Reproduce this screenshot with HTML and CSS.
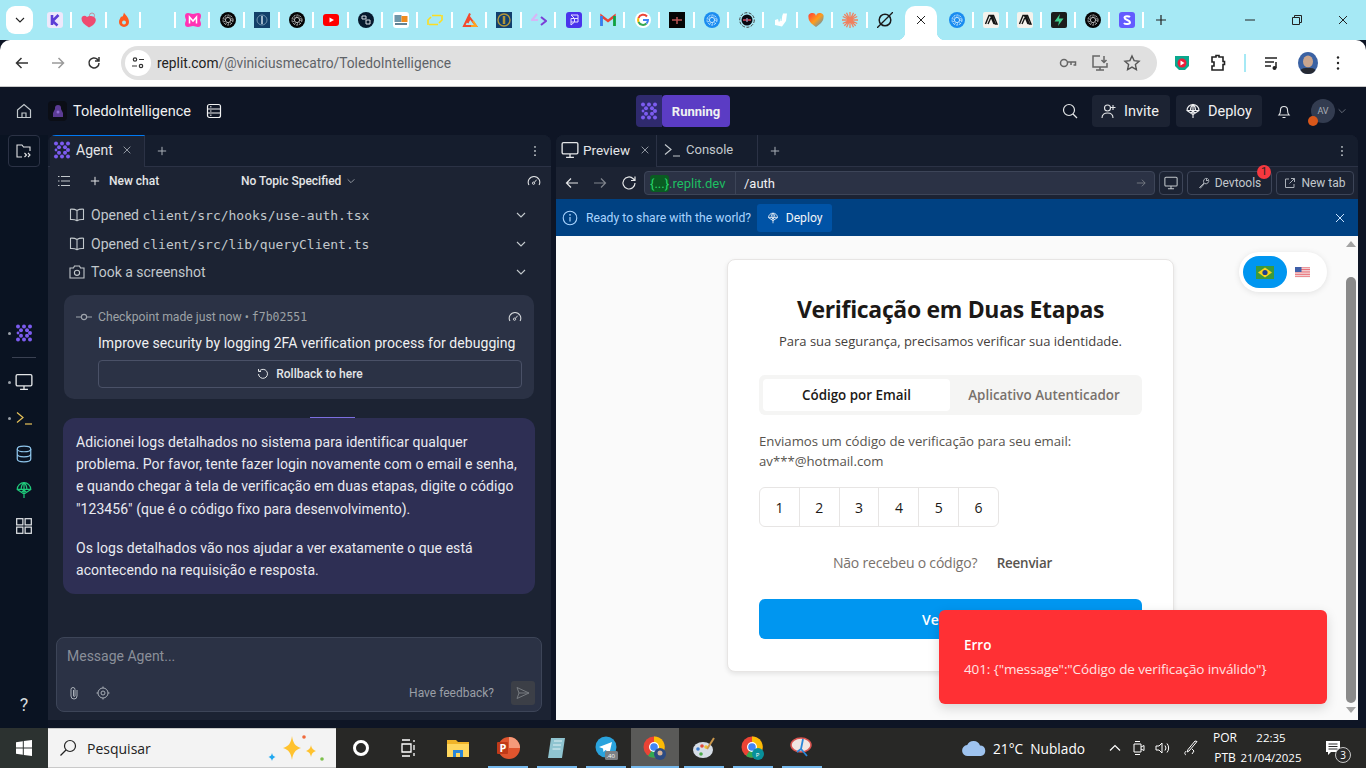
FILE: index.html
```html
<!DOCTYPE html>
<html lang="pt-BR">
<head>
    <meta charset="UTF-8">
    <title>ToledoIntelligence - Replit</title>
    <link rel="stylesheet" href="styles.css">
</head>
<body>
    <svg class="defs" xmlns="http://www.w3.org/2000/svg">
        <symbol id="i-agent" viewBox="0 0 18 18">
            <g fill="currentColor">
                <circle cx="3" cy="2.5" r="2"/><circle cx="9" cy="2.5" r="2"/><circle cx="15" cy="2.5" r="2"/>
                <circle cx="6" cy="6.2" r="2"/><circle cx="12" cy="6.2" r="2"/>
                <circle cx="3" cy="9" r="1.4"/><circle cx="15" cy="9" r="2"/>
                <circle cx="6" cy="11.8" r="2"/><circle cx="12" cy="11.8" r="2"/>
                <circle cx="3" cy="15.5" r="2"/><circle cx="9" cy="15.5" r="2"/><circle cx="15" cy="15.5" r="2"/>
            </g>
        </symbol>
        <symbol id="i-monitor" viewBox="0 0 16 16">
            <rect x="1" y="1.5" width="14" height="10" rx="1.2" fill="none" stroke="currentColor" stroke-width="1.2"/>
            <path d="M8 11.5v3M4.5 14.5h7" fill="none" stroke="currentColor" stroke-width="1.2"/>
        </symbol>
        <symbol id="i-term" viewBox="0 0 18 16">
            <path d="M2 2.5 8 7.5 2 12.5" fill="none" stroke="currentColor" stroke-width="1.2"/>
            <path d="M10 14h7" fill="none" stroke="currentColor" stroke-width="1.2"/>
        </symbol>
        <symbol id="i-chev" viewBox="0 0 12 12">
            <path d="M2 4 6 8 10 4" fill="none" stroke="currentColor" stroke-width="1.1"/>
        </symbol>
        <symbol id="i-close" viewBox="0 0 12 12">
            <path d="M2 2 10 10M10 2 2 10" fill="none" stroke="currentColor" stroke-width="1"/>
        </symbol>
        <symbol id="i-plus" viewBox="0 0 12 12">
            <path d="M6 1v10M1 6h10" fill="none" stroke="currentColor" stroke-width="1.2"/>
        </symbol>
        <symbol id="i-dots" viewBox="0 0 12 16">
            <g fill="currentColor"><circle cx="6" cy="2.5" r="1.2"/><circle cx="6" cy="8" r="1.2"/><circle cx="6" cy="13.5" r="1.2"/></g>
        </symbol>
        <symbol id="i-book" viewBox="0 0 16 16">
            <path d="M8 3.500C6.500 2.500 4 2 1.500 2.200v10.300c2.500-.2 5 .2 6.500 1.200 1.500-1 4-1.400 6.500-1.200V2.200C12 2 9.500 2.500 8 3.500ZM8 3.500v10.200" fill="none" stroke="currentColor" stroke-width="1.100"/>
        </symbol>
        <symbol id="i-gauge" viewBox="0 0 16 16">
            <path d="M2.200 12.500A6.600 6.600 0 1 1 13.800 12.500" fill="none" stroke="currentColor" stroke-width="1.200"/>
            <circle cx="7.500" cy="10.500" r="1.300" fill="none" stroke="currentColor" stroke-width="1.100"/>
            <path d="M8.500 9.500 11 6.500" stroke="currentColor" stroke-width="1.100"/>
        </symbol>
        <symbol id="i-globe" viewBox="0 0 16 16">
            <g fill="none" stroke="currentColor" stroke-width="1.100">
                <path d="M2 7.500a6 6 0 0 1 12 0Z"/>
                <path d="M5.500 7.500C5.500 4.500 6.500 2.500 8 1.500 9.500 2.500 10.500 4.500 10.500 7.500M2 7.500 8 11.500 14 7.500M8 1.500V15M6 10l2-2 2 2"/>
            </g>
        </symbol>
        <symbol id="i-flower" viewBox="0 0 16 16">
            <circle cx="8" cy="8" r="8" fill="#050505"/>
            <g fill="none" stroke="#cfcfcf" stroke-width=".9">
                <circle cx="8" cy="8" r="2.600"/>
                <circle cx="8" cy="8" r="5" stroke-dasharray="2.200 1"/>
                <circle cx="8" cy="8" r="3.800" stroke-dasharray="1 1.400"/>
            </g>
        </symbol>
        <symbol id="i-flower-blue" viewBox="0 0 16 16">
            <circle cx="8" cy="8" r="8" fill="#1a8cf0"/>
            <g fill="none" stroke="#d8efff" stroke-width=".9">
                <circle cx="8" cy="8" r="2.600"/>
                <circle cx="8" cy="8" r="5" stroke-dasharray="2.200 1"/>
                <circle cx="8" cy="8" r="3.800" stroke-dasharray="1 1.400"/>
            </g>
        </symbol>
        <symbol id="i-anthropic" viewBox="0 0 16 16">
            <rect width="16" height="16" rx="2" fill="#f4f2ec"/>
            <path d="M2.500 12 6 3.500h1.500L11 12M5 12l2.700-6M9 3.500h1.500L14 12h-1.800Z" fill="none" stroke="#141413" stroke-width="1.400"/>
        </symbol>
    </svg>

    <!-- barra de abas do navegador -->
    <div class="tabstrip">
        <div class="tab-menu"><svg class="ic-12"><use href="#i-chev"/></svg></div>
        <div class="tab"><svg class="fav" viewBox="0 0 16 16"><rect width="16" height="16" rx="3" fill="#eee8fb"/><path d="M5 3v10M11.500 3 5.500 9l5 4.500" fill="none" stroke="#5b3fd6" stroke-width="2.600"/></svg></div>
        <div class="tab"><svg class="fav" viewBox="0 0 16 16"><circle cx="11" cy="3.500" r="2.500" fill="none" stroke="#c58a9b"/><path d="M8 15.500C3 12.500.5 10 .5 6.800.5 4 3.800 2.800 6 5c2.500-2 8.800-.5 8.800 3 0 3-3 6-6.800 7.500Z" fill="#ee4b70"/></svg></div>
        <div class="tab"><svg class="fav" viewBox="0 0 16 16"><path d="M8 .5c1 2.500 5 4.500 5 9.500a5 5 0 0 1-10 0C3 7.500 4.500 6.500 5 4.500c1 .5 2 .5 3-4Z" fill="#ff5a1f"/><circle cx="8" cy="10.500" r="2" fill="#a6e9f5"/></svg></div>
        <div class="tab"></div>
        <div class="tab"><svg class="fav" viewBox="0 0 16 16"><path d="M3 1c2 0 3 1 5 1s3-1 5-1 3 1 3 3-1 3-1 4 1 2 1 4-1 3-3 3-3-1-5-1-3 1-5 1-3-1-3-3 1-3 1-4-1-2-1-4 1-3 3-3Z" fill="#ff33b4"/><path d="M4.500 11.500V5L8 9l3.500-4v6.500" fill="none" stroke="#fff" stroke-width="1.500"/></svg></div>
        <div class="tab"><svg class="fav"><use href="#i-flower"/></svg></div>
        <div class="tab"><svg class="fav" viewBox="0 0 16 16"><rect width="16" height="16" fill="#12416a"/><circle cx="8" cy="8" r="5" fill="none" stroke="#6f92ad"/><path d="M8 4v8" stroke="#9fb6c8" stroke-width="2"/></svg></div>
        <div class="tab"><svg class="fav"><use href="#i-flower"/></svg></div>
        <div class="tab"><svg class="fav" viewBox="0 0 16 16"><rect y="2" width="16" height="12" rx="3" fill="#f00"/><path d="M6.500 5.500v5L11 8Z" fill="#fff"/></svg></div>
        <div class="tab"><svg class="fav" viewBox="0 0 16 16"><circle cx="8" cy="8" r="8" fill="#071a2e"/><path d="M4 4h4v3H4ZM8 8h4v4H8Z" fill="none" stroke="#d7dde3"/></svg></div>
        <div class="tab"><svg class="fav" viewBox="0 0 16 16"><rect width="16" height="16" rx="3" fill="#fff"/><rect x="1.500" y="3" width="7" height="7" fill="#6f96a8"/><rect x="8.500" y="4" width="6" height="6" fill="#ef8b1d"/><path d="M2 12h12" stroke="#2d5870" stroke-width="1.500"/></svg></div>
        <div class="tab"><svg class="fav" viewBox="0 0 16 16"><path d="M1 13V8l3-3M15 3v5l-3 3M5 3.500h9M2 12.500h9" fill="none" stroke="#ffdd1f" stroke-width="1.600"/></svg></div>
        <div class="tab"><svg class="fav" viewBox="0 0 16 16"><path d="M8 1.500 2 14h12L8 6 5.500 11" fill="none" stroke="#f24a2e" stroke-width="2"/><path d="M9 14h5L11 9" fill="none" stroke="#ffa51f" stroke-width="2"/></svg></div>
        <div class="tab"><svg class="fav" viewBox="0 0 16 16"><rect width="16" height="16" fill="#12406e"/><circle cx="8" cy="8" r="6" fill="none" stroke="#b0953a" stroke-width="1.400"/><path d="M8 4v8" stroke="#b0953a" stroke-width="2.500"/></svg></div>
        <div class="tab"><svg class="fav" viewBox="0 0 16 16"><path d="M6 2 1 8h6" fill="none" stroke="#d6b6f5" stroke-width="2.200"/><path d="M10 5l5 4-5 4" fill="none" stroke="#7a3fd6" stroke-width="2"/></svg></div>
        <div class="tab"><svg class="fav" viewBox="0 0 16 16"><rect width="16" height="16" rx="3" fill="#4a34ec"/><path d="M5 3h7v3.500H8.500L5 3ZM5 6.500h3.500V10H5ZM8.500 6.500H12V10H8.500L5 13V10" fill="none" stroke="#e5e1ff"/></svg></div>
        <div class="tab"><svg class="fav" viewBox="0 0 16 16"><path d="M1.500 14V4l6.500 5 6.500-5v10" fill="none" stroke="#ea4335" stroke-width="2.400"/><path d="M1.500 14V4" stroke="#2a84fc" stroke-width="2.600"/><path d="M14.500 14V4" stroke="#00ac47" stroke-width="2.600"/></svg></div>
        <div class="tab"><svg class="fav" viewBox="0 0 16 16"><circle cx="8" cy="8" r="8" fill="#fff"/><path d="M12 4.500A5 5 0 0 0 3.500 6" fill="none" stroke="#ea4335" stroke-width="2"/><path d="M3.500 6a5 5 0 0 0 0 4" fill="none" stroke="#fbbc05" stroke-width="2"/><path d="M3.500 10a5 5 0 0 0 8 1.500" fill="none" stroke="#34a853" stroke-width="2"/><path d="M11.500 11.500a5 5 0 0 0 1.500-3.500H8" fill="none" stroke="#4285f4" stroke-width="2"/></svg></div>
        <div class="tab"><svg class="fav" viewBox="0 0 16 16"><rect width="16" height="16" fill="#050505"/><path d="M3 8h10M8 5v7" stroke="#b55" stroke-width="1.500"/></svg></div>
        <div class="tab"><svg class="fav"><use href="#i-flower-blue"/></svg></div>
        <div class="tab"><svg class="fav" viewBox="0 0 16 16"><circle cx="8" cy="8" r="7.300" fill="none" stroke="#444" stroke-dasharray="3 1.500"/><circle cx="8" cy="8" r="5.500" fill="#0a0a12"/><path d="M4 8h8" stroke="#d9495c" stroke-width="1.500"/><path d="M8 6v4" stroke="#88a" stroke-width="1.500"/></svg></div>
        <div class="tab"><svg class="fav" viewBox="0 0 16 16"><path d="M10 1.500h4L13 9l-4 5.500-7-1.500L2 8l3-1 1 3.500Z" fill="#fff"/><path d="M9 2 8 9" stroke="#a6e9f5"/></svg></div>
        <div class="tab"><svg class="fav" viewBox="0 0 16 16"><defs><linearGradient id="hg" x1="0" y1="0" x2="1" y2="1"><stop offset="0" stop-color="#ff3d3d"/><stop offset=".5" stop-color="#ff9d1c"/><stop offset="1" stop-color="#2a8fe8"/></linearGradient></defs><path d="M8 15C3 11.500.5 9 .5 5.500A3.800 3.800 0 0 1 8 4a3.800 3.800 0 0 1 7.500 1.500C15.500 9 13 11.500 8 15Z" fill="url(#hg)"/></svg></div>
        <div class="tab"><svg class="fav" viewBox="0 0 16 16"><path d="M8 0v16M0 8h16M2.300 2.300 13.700 13.700M13.700 2.300 2.300 13.700M4.500 .8l7 14.400M11.500 .8l-7 14.400M.8 4.500l14.400 7M15.200 4.500l-14.400 7" stroke="#f0805e" stroke-width="1.300"/></svg></div>
        <div class="tab no-sep"><svg class="fav" viewBox="0 0 16 16"><circle cx="8" cy="8" r="5.800" fill="none" stroke="#1a1a1a" stroke-width="1.500"/><path d="M0 16 16 0" stroke="#1a1a1a" stroke-width="1.300"/></svg></div>
        <div class="tab-active"><svg class="ic-12"><use href="#i-close"/></svg></div>
        <div class="tab tab-r first-after"><svg class="fav"><use href="#i-flower-blue"/></svg></div>
        <div class="tab tab-r"><svg class="fav"><use href="#i-anthropic"/></svg></div>
        <div class="tab tab-r"><svg class="fav"><use href="#i-anthropic"/></svg></div>
        <div class="tab tab-r"><svg class="fav" viewBox="0 0 16 16"><rect width="16" height="16" rx="2" fill="#1c1c1c"/><path d="M9 2 3.500 9.500H8L7 14l5.500-7.500H8Z" fill="#3ecf8e"/></svg></div>
        <div class="tab tab-r"><svg class="fav"><use href="#i-flower"/></svg></div>
        <div class="tab tab-r"><svg class="fav" viewBox="0 0 16 16"><rect width="16" height="16" rx="3" fill="#635bff"/><path d="M11 5C10 4 5.500 3.500 5.500 5.800S11 8 11 10.300 6 12.500 5 11" fill="none" stroke="#fff" stroke-width="2"/></svg></div>
        <div class="tab-new"><svg class="ic-12"><use href="#i-plus"/></svg></div>
        <div class="win-controls">
            <svg class="ic-12" viewBox="0 0 12 12"><path d="M1 6h10" stroke="#222" stroke-width="1"/></svg>
            <svg class="ic-12" viewBox="0 0 12 12"><path d="M1.500 3.500h7v7h-7ZM3.500 3.500v-2h7v7h-2" fill="none" stroke="#222"/></svg>
            <svg class="ic-12 win-x"><use href="#i-close"/></svg>
        </div>
    </div>

    <!-- barra de endereco -->
    <div class="toolbar">
        <svg class="tool-ic" viewBox="0 0 16 16"><path d="M14 8H2.500M7.500 3 2.500 8l5 5" fill="none" stroke="#333" stroke-width="1.500"/></svg>
        <svg class="tool-ic" viewBox="0 0 16 16"><path d="M2 8h11.500M8.500 3l5 5-5 5" fill="none" stroke="#9a9a9a" stroke-width="1.500"/></svg>
        <svg class="tool-ic" viewBox="0 0 16 16"><path d="M13 8a5 5 0 1 1-1.500-3.600L13 6M13 2v4H9" fill="none" stroke="#333" stroke-width="1.500"/></svg>
        <div class="omnibox">
            <span class="site-btn"><svg class="ic-16" viewBox="0 0 16 16"><circle cx="5" cy="4.500" r="1.700" fill="none" stroke="#333" stroke-width="1.200"/><path d="M9 4.500h5M2 11h5" stroke="#333" stroke-width="1.200"/><circle cx="11" cy="11" r="1.700" fill="none" stroke="#333" stroke-width="1.200"/></svg></span>
            <span class="url"><b>replit.com</b>/@viniciusmecatro/ToledoIntelligence</span>
            <span class="omni-right">
                <svg class="ic-18" viewBox="0 0 18 18"><circle cx="5" cy="9" r="3.500" fill="none" stroke="#666" stroke-width="1.500"/><path d="M8.500 8h8v3h-2M12 8v3" fill="none" stroke="#666" stroke-width="1.500"/></svg>
                <svg class="ic-18" viewBox="0 0 18 18"><path d="M9 2H2v11h14v-4M9 13v3M5 16h8M13 2v6M10.500 6 13 8.500 15.500 6" fill="none" stroke="#666" stroke-width="1.500"/></svg>
                <svg class="ic-18" viewBox="0 0 18 18"><path d="M9 2l2.100 4.600 5 .6-3.700 3.400 1 5L9 13.100 4.600 15.600l1-5L1.900 7.200l5-.6Z" fill="none" stroke="#555" stroke-width="1.400"/></svg>
            </span>
        </div>
        <div class="ext">
            <svg class="ic-16" viewBox="0 0 16 16"><path d="M1 1h14v10l-4 4H5l-4-4Z" fill="#0aa88e"/><circle cx="8" cy="8" r="4.500" fill="#ee1c3a"/><path d="M6.500 5.500v5L10.500 8Z" fill="#fff"/></svg>
            <svg class="ic-18" viewBox="0 0 18 18"><path d="M3 3h4V1.500h3V3h4v4.500h1.500v3H14V16H3v-4h2V8H3Z" fill="none" stroke="#222" stroke-width="1.600"/></svg>
            <span class="ext-sep"></span>
            <svg class="ic-18" viewBox="0 0 18 18"><path d="M2 4h12M2 8h9M2 12h6" stroke="#222" stroke-width="1.500"/><path d="M13 8v6" stroke="#222" stroke-width="1.500"/><circle cx="11.500" cy="14" r="2" fill="#222"/></svg>
            <svg class="profile" viewBox="0 0 20 22"><ellipse cx="10" cy="11" rx="10" ry="11" fill="#3b62a3"/><ellipse cx="10" cy="9.500" rx="5" ry="6" fill="#c9a58e"/><path d="M2.500 18c2-3 13-3 15 0-2 3-4 4-7.500 4s-5.500-1-7.500-4Z" fill="#262a33"/></svg>
            <svg class="ic-16 dots-dark"><use href="#i-dots"/></svg>
        </div>
    </div>

    <div class="app">
        <header class="topbar">
            <div class="top-left">
                <svg class="ic-16" viewBox="0 0 16 16"><path d="M1.500 7 8 1.500 14.500 7v7.500h-13ZM6 14.500V10h4v4.500" fill="none" stroke="#c2c8cc" stroke-width="1.200"/></svg>
                <span class="repl-logo"><svg class="ic-14" viewBox="0 0 12 14"><path d="M6 1a3 3 0 0 1 3 3v1l2 4v4H1V9l2-4V4a3 3 0 0 1 3-3Z" fill="#5b3b94"/><circle cx="6" cy="8" r="1.500" fill="#8f6bd0"/></svg></span>
                <span class="repl-name">ToledoIntelligence</span>
                <svg class="ic-16 repl-db" viewBox="0 0 16 16"><rect x="1.500" y="1.500" width="13" height="13" rx="2" fill="none" stroke="#f0f1f2" stroke-width="1.200"/><path d="M1.500 6h13M1.500 10h13M4 3.800h1.500M4 8h1.500M4 12.200h1.500" stroke="#f0f1f2"/></svg>
            </div>
            <div class="run-btn">
                <span class="run-ic"><svg class="ic-18"><use href="#i-agent"/></svg></span>
                <span class="run-label">Running</span>
            </div>
            <div class="top-right">
                <svg class="ic-16 top-search" viewBox="0 0 16 16"><circle cx="7" cy="7" r="5.500" fill="none" stroke="#e4e6e8" stroke-width="1.200"/><path d="M11 11l4 4" stroke="#e4e6e8" stroke-width="1.200"/></svg>
                <div class="top-btn top-invite"><svg class="ic-16" viewBox="0 0 16 16"><circle cx="6.500" cy="5" r="3" fill="none" stroke="#e4e6e8" stroke-width="1.100"/><path d="M1 15c0-3.500 2.500-5 5.500-5s5.500 1.500 5.500 5M12 2v5M9.500 4.500h5" fill="none" stroke="#e4e6e8" stroke-width="1.100"/></svg>Invite</div>
                <div class="top-btn top-deploy"><svg class="ic-16"><use href="#i-globe"/></svg>Deploy</div>
                <svg class="ic-16 top-bell" viewBox="0 0 16 16"><path d="M3 12c1-1 1.500-2 1.500-5a3.500 3.500 0 0 1 7 0c0 3 .5 4 1.500 5ZM6.500 14.500h3" fill="none" stroke="#e4e6e8" stroke-width="1.100"/></svg>
                <span class="avatar">AV<i class="avatar-dot"></i></span>
                <svg class="ic-12 top-chev"><use href="#i-chev"/></svg>
            </div>
        </header>

        <div class="workspace">
            <nav class="rail">
                <div class="rail-files"><svg class="ic-18" viewBox="0 0 18 18"><path d="M7 15H2V3h5l1.500 2H15v4" fill="none" stroke="#e4e6e8" stroke-width="1.100"/><path d="M9.500 11l2 2-2 2M13 11l2 2-2 2" fill="none" stroke="#e4e6e8" stroke-width="1.100"/></svg></div>
                <div class="rail-item rail-first on"><svg class="ic-18 purple"><use href="#i-agent"/></svg></div>
                <div class="rail-sep"></div>
                <div class="rail-item on"><svg class="ic-16-b"><use href="#i-monitor"/></svg></div>
                <div class="rail-item on rail-gap"><svg class="ic-16-b yellow"><use href="#i-term"/></svg></div>
                <div class="rail-item rail-gap"><svg class="ic-16-b" viewBox="0 0 16 16"><g fill="none" stroke="#8ec5ec" stroke-width="1.100"><ellipse cx="8" cy="3.500" rx="6" ry="2.500"/><path d="M2 3.500v9c0 1.400 2.700 2.500 6 2.500s6-1.100 6-2.500v-9M2 8c0 1.400 2.700 2.500 6 2.500s6-1.100 6-2.500"/></g></svg></div>
                <div class="rail-item rail-gap green"><svg class="ic-16-b"><use href="#i-globe"/></svg></div>
                <div class="rail-item rail-gap"><svg class="ic-16-b" viewBox="0 0 16 16"><g fill="none" stroke="#dfe2e5" stroke-width="1.100"><rect x="1.500" y="1.500" width="5.500" height="5.500"/><rect x="9" y="1.500" width="5.500" height="5.500"/><rect x="1.500" y="9" width="5.500" height="5.500"/><rect x="9" y="9" width="5.500" height="5.500"/></g></svg></div>
                <div class="rail-help">?</div>
            </nav>

            <section class="panel agent">
                <div class="panel-tabs">
                    <div class="ptab ptab-agent"><svg class="ic-16-b purple"><use href="#i-agent"/></svg><span>Agent</span><svg class="ic-10"><use href="#i-close"/></svg></div>
                    <svg class="ic-10 ptab-plus"><use href="#i-plus"/></svg>
                    <svg class="ic-12 ptab-dots"><use href="#i-dots"/></svg>
                </div>
                <div class="chat-bar">
                    <svg class="ic-14" viewBox="0 0 14 14"><path d="M4 2.500h9M4 7h9M4 11.500h9M1 2.500h1.500M1 7h1.500M1 11.500h1.500" stroke="#c2c8cc" stroke-width="1.200"/></svg>
                    <svg class="ic-10 chat-plus"><use href="#i-plus"/></svg>
                    <span class="chat-new">New chat</span>
                    <span class="chat-topic">No Topic Specified</span>
                    <svg class="ic-10 muted"><use href="#i-chev"/></svg>
                    <svg class="ic-14 chat-gauge"><use href="#i-gauge"/></svg>
                </div>
                <div class="steps">
                    <div class="step"><svg class="ic-16"><use href="#i-book"/></svg><span>Opened <code>client/src/hooks/use-auth.tsx</code></span><svg class="ic-12 step-chev"><use href="#i-chev"/></svg></div>
                    <div class="step"><svg class="ic-16"><use href="#i-book"/></svg><span>Opened <code>client/src/lib/queryClient.ts</code></span><svg class="ic-12 step-chev"><use href="#i-chev"/></svg></div>
                    <div class="step"><svg class="ic-16" viewBox="0 0 16 16"><path d="M1 4h3.500l1-2h5l1 2H15v10H1Z" fill="none" stroke="currentColor" stroke-width="1.100"/><circle cx="8" cy="8.800" r="2.600" fill="none" stroke="currentColor" stroke-width="1.100"/></svg><span>Took a screenshot</span><svg class="ic-12 step-chev"><use href="#i-chev"/></svg></div>
                </div>
                <div class="checkpoint">
                    <div class="cp-head">
                        <svg class="cp-ic" viewBox="0 0 16 8"><circle cx="8" cy="4" r="2.600" fill="none" stroke="#a0a5ad" stroke-width="1.100"/><path d="M0 4h5M11 4h5" stroke="#a0a5ad" stroke-width="1.100"/></svg>
                        <span>Checkpoint made just now • <code>f7b02551</code></span>
                        <svg class="ic-14 cp-gauge"><use href="#i-gauge"/></svg>
                    </div>
                    <div class="cp-title">Improve security by logging 2FA verification process for debugging</div>
                    <div class="cp-rollback"><svg class="ic-12" viewBox="0 0 12 12"><path d="M2.500 3a4.500 4.500 0 1 1-1 3M1.500 1v2.500H4" fill="none" stroke="#e4e6e8" stroke-width="1"/></svg>Rollback to here</div>
                </div>
                <div class="handle"></div>
                <div class="bubble">
                    <p>Adicionei logs detalhados no sistema para identificar qualquer problema. Por favor, tente fazer login novamente com o email e senha, e quando chegar à tela de verificação em duas etapas, digite o código "123456" (que é o código fixo para desenvolvimento).</p>
                    <p>Os logs detalhados vão nos ajudar a ver exatamente o que está acontecendo na requisição e resposta.</p>
                </div>
                <div class="composer">
                    <div class="composer-ph">Message Agent...</div>
                    <div class="composer-row">
                        <svg class="ic-14" viewBox="0 0 14 14"><path d="M10 4v6a3 3 0 0 1-6 0V3.500a2 2 0 0 1 4 0V10a.8.8 0 0 1-1.500 0V4" fill="none" stroke="#aab0b8" stroke-width="1"/></svg>
                        <svg class="ic-14 comp-target" viewBox="0 0 14 14"><circle cx="7" cy="7" r="5" fill="none" stroke="#aab0b8"/><circle cx="7" cy="7" r="2" fill="none" stroke="#aab0b8"/><path d="M7 .5v1.500M7 12v1.500M.5 7H2M12 7h1.500" stroke="#aab0b8"/></svg>
                        <span class="comp-feedback">Have feedback?</span>
                        <span class="comp-send"><svg class="ic-14" viewBox="0 0 14 14"><path d="M1 1.500 13 7 1 12.500 3 7ZM3 7h10" fill="none" stroke="#777b80"/></svg></span>
                    </div>
                </div>
            </section>

            <section class="panel preview">
                <div class="panel-tabs dark-tabs">
                    <div class="ptab ptab-preview"><svg class="ic-16-b"><use href="#i-monitor"/></svg><span>Preview</span><svg class="ic-10"><use href="#i-close"/></svg></div>
                    <div class="ptab ptab-console"><svg class="ic-16-b"><use href="#i-term"/></svg><span>Console</span></div>
                    <svg class="ic-10 ptab-plus2"><use href="#i-plus"/></svg>
                    <svg class="ic-12 ptab-dots"><use href="#i-dots"/></svg>
                </div>
                <div class="pv-nav">
                    <svg class="ic-14" viewBox="0 0 14 14"><path d="M13 7H1.500M6 2.500 1.500 7 6 11.500" fill="none" stroke="#e4e6e8" stroke-width="1.200"/></svg>
                    <svg class="ic-14 pv-fwd" viewBox="0 0 14 14"><path d="M1 7h11.500M8 2.500 12.500 7 8 11.500" fill="none" stroke="#80858d" stroke-width="1.200"/></svg>
                    <svg class="ic-16 pv-reload" viewBox="0 0 16 16"><path d="M14 8a6 6 0 1 1-1.800-4.300L14 5.500M14 1.500v4h-4" fill="none" stroke="#e4e6e8" stroke-width="1.200"/></svg>
                    <div class="pv-url">
                        <span class="pv-host"><span class="pv-brace">{...}</span>.replit.dev</span>
                        <span class="pv-path">/auth</span>
                        <svg class="ic-10 pv-go" viewBox="0 0 12 12"><path d="M1 6h10M7 2l4 4-4 4" fill="none" stroke="#7d828a"/></svg>
                    </div>
                    <div class="pv-btn pv-screen"><svg class="ic-14"><use href="#i-monitor"/></svg></div>
                    <div class="pv-btn pv-devtools"><svg class="ic-12" viewBox="0 0 12 12"><path d="M1.500 10.500 6 6a3 3 0 0 1 3.500-4.500L8 3l1 1 1.500-1.500A3 3 0 0 1 6.500 6.500L2.500 11Z" fill="none" stroke="#aab0b8"/></svg>Devtools<i class="badge">1</i></div>
                    <div class="pv-btn pv-newtab"><svg class="ic-12" viewBox="0 0 12 12"><path d="M5 2H1.500v8.500H10V7M7 1.500h3.500V5M10.500 1.500 5.500 6.500" fill="none" stroke="#aab0b8"/></svg>New tab</div>
                </div>
                <div class="pv-banner">
                    <svg class="ic-16" viewBox="0 0 16 16"><circle cx="8" cy="8" r="6.800" fill="none" stroke="#a9d4ff" stroke-width="1.100"/><path d="M8 7v4.500" stroke="#a9d4ff" stroke-width="1.200"/><circle cx="8" cy="4.800" r=".9" fill="#a9d4ff"/></svg>
                    <span class="banner-text">Ready to share with the world?</span>
                    <span class="banner-deploy"><svg class="ic-12"><use href="#i-globe"/></svg>Deploy</span>
                    <svg class="ic-12 banner-close"><use href="#i-close"/></svg>
                </div>

                <div class="pv-page">
                    <div class="page-scroll">
                        <div class="card">
                            <h1>Verificação em Duas Etapas</h1>
                            <p class="card-sub">Para sua segurança, precisamos verificar sua identidade.</p>
                            <div class="seg">
                                <span class="seg-on">Código por Email</span>
                                <span class="seg-off">Aplicativo Autenticador</span>
                            </div>
                            <p class="card-info">Enviamos um código de verificação para seu email:<br><span class="card-mail">av***@hotmail.com</span></p>
                            <div class="otp">
                                <span>1</span><span>2</span><span>3</span><span>4</span><span>5</span><span>6</span>
                            </div>
                            <div class="resend">Não recebeu o código? <b>Reenviar</b></div>
                            <div class="verify">Verificar</div>
                        </div>
                    </div>
                    <div class="scrollbar">
                        <i class="sb-up"></i>
                        <i class="sb-thumb"></i>
                        <i class="sb-down"></i>
                    </div>

                    <div class="lang">
                        <span class="lang-on">
                            <svg class="flag-br" viewBox="0 0 18 13"><rect width="18" height="13" fill="#3c9a3c"/><path d="M9 1.500 16 6.500 9 11.500 2 6.500Z" fill="#f7d21d"/><circle cx="9" cy="6.500" r="2.600" fill="#1f3f8f"/></svg>
                        </span>
                        <svg class="flag-us" viewBox="0 0 15 11"><rect width="15" height="11" fill="#f6f6f6"/><path d="M0 .8h15M0 2.500h15M0 4.200h15M0 5.900h15M0 7.600h15M0 9.300h15" stroke="#e8636b" stroke-width=".9"/><rect width="6.500" height="5" fill="#3f5fa8"/></svg>
                    </div>

                    <div class="toast">
                        <div class="toast-title">Erro</div>
                        <div class="toast-msg">401: {"message":"Código de verificação inválido"}</div>
                    </div>
                </div>
            </section>
        </div>
    </div>

    <!-- barra de tarefas do windows -->
    <footer class="taskbar">
        <div class="tb-start"><svg class="ic-18" viewBox="0 0 18 18"><path d="M1 3.200 7.800 2.200V8.500H1ZM8.800 2 17 1V8.500H8.800ZM1 9.500H7.800V15.800L1 14.800ZM8.800 9.500H17V17L8.800 16Z" fill="#fff"/></svg></div>
        <div class="tb-search">
            <svg class="ic-18" viewBox="0 0 18 18"><circle cx="11" cy="7" r="5.500" fill="none" stroke="#222" stroke-width="1.200"/><path d="M7 11l-5.500 5.500" stroke="#222" stroke-width="1.200"/></svg>
            <span>Pesquisar</span>
            <svg class="tb-sparkle" viewBox="0 0 60 32"><path d="M26 4c1 7 3 10 9 12-6 2-8 5-9 12-1-7-3-10-9-12 6-2 8-5 9-12Z" fill="#ffc22e"/><path d="M45 13c.5 3 1.500 4.500 5 6-3.500 1-4.500 3-5 6-.5-3-1.500-5-5-6 3.500-1.500 4.500-3 5-6Z" fill="#ffc22e"/><path d="M6 21c.4 2 1 3 3.500 4C7 26 6.400 27 6 29c-.4-2-1-3-3.500-4C5 24 5.600 23 6 21Z" fill="#1fa8f0"/><circle cx="38" cy="5" r="1.800" fill="#ef6a3b"/><circle cx="56" cy="27" r="1.800" fill="#7cc04a"/></svg>
        </div>
        <div class="tb-cortana"><i></i></div>
        <div class="tb-app tb-view"><svg class="ic-18" viewBox="0 0 18 18"><path d="M3 1h8M3 17h8M3 5h9v8H3ZM15 1v2M15 6v5M15 14v3" fill="none" stroke="#fff" stroke-width="1.300"/></svg></div>
        <div class="tb-app tb-explorer"><svg class="ic-24" viewBox="0 0 24 24"><path d="M1 4h9l2 2h11v15H1Z" fill="#f0b429"/><path d="M1 8h22v13H1Z" fill="#ffd75e"/><path d="M7 14h10v7H7Z" fill="#2a86d8"/><rect x="10" y="17" width="4" height="4" fill="#ffd75e"/></svg></div>
        <div class="tb-app tb-running"><svg class="ic-24" viewBox="0 0 24 24"><circle cx="13" cy="12" r="11" fill="#e0552e"/><path d="M13 1a11 11 0 0 1 11 11H13Z" fill="#f59a7a"/><rect x="1" y="6" width="11" height="12" rx="1" fill="#c03a18"/><text x="3.500" y="16" class="ppt">P</text></svg></div>
        <div class="tb-app tb-running"><svg class="ic-24" viewBox="0 0 24 24"><path d="M6 2h14l-3 20H3Z" fill="#8fc4d0"/><path d="M9 5h8M8 9h8M7.500 13h8" stroke="#dff1f5"/></svg></div>
        <div class="tb-app tb-running"><svg class="ic-24" viewBox="0 0 24 24"><circle cx="12" cy="11" r="10.500" fill="#2aa3dd"/><path d="M5 11 18 6l-2.500 11-4-3-2 2-.5-3.500Z" fill="#fff"/><rect x="11" y="15" width="13" height="9" rx="1.500" fill="#7b7f83"/><text x="12.500" y="22" class="tb-badge-txt">.40</text></svg></div>
        <div class="tb-app tb-active"><svg class="ic-24" viewBox="0 0 24 24"><circle cx="11" cy="11" r="10.500" fill="#ea4335"/><path d="M11 11 20 16A10.500 10.500 0 0 1 5 20Z" fill="#34a853"/><path d="M11 .5A10.500 10.500 0 0 1 20.500 16L11 11Z" fill="#fbbc05"/><circle cx="11" cy="11" r="5" fill="#fff"/><circle cx="11" cy="11" r="3.800" fill="#4285f4"/><circle cx="17" cy="18" r="6" fill="#2d4b82"/><circle cx="17" cy="17" r="2.500" fill="#d7b39a"/></svg></div>
        <div class="tb-app tb-running"><svg class="ic-24" viewBox="0 0 24 24"><ellipse cx="11" cy="14" rx="10" ry="8" fill="#d6dde6"/><circle cx="6" cy="13" r="1.800" fill="#3f7fd0"/><circle cx="10" cy="10" r="1.800" fill="#e0483a"/><circle cx="14" cy="11" r="1.800" fill="#f0c030"/><circle cx="9" cy="18" r="1.800" fill="#4aa84a"/><path d="M15 13 22 2" stroke="#c9964a" stroke-width="2"/></svg></div>
        <div class="tb-app tb-running"><svg class="ic-24" viewBox="0 0 24 24"><circle cx="11" cy="11" r="10.500" fill="#ea4335"/><path d="M11 11 20 16A10.500 10.500 0 0 1 5 20Z" fill="#34a853"/><path d="M11 .5A10.500 10.500 0 0 1 20.500 16L11 11Z" fill="#fbbc05"/><circle cx="11" cy="11" r="5" fill="#fff"/><circle cx="11" cy="11" r="3.800" fill="#4285f4"/><circle cx="17" cy="18" r="6" fill="#08909a"/><text x="14.800" y="21" class="tb-badge-txt">P</text></svg></div>
        <div class="tb-app tb-running"><svg class="ic-24" viewBox="0 0 24 24"><ellipse cx="11" cy="9" rx="10" ry="7" fill="#f1e6e2" stroke="#d9534f" stroke-width="1.500"/><path d="M13 3 11 13M17 20l-6-7-4 3" fill="none" stroke="#2a86d8" stroke-width="1.800"/></svg></div>
        <div class="tb-tray">
            <svg class="tray-cloud" viewBox="0 0 26 18"><path d="M7 17a5.500 5.500 0 0 1-.8-11A7 7 0 0 1 19 6.500 5.300 5.300 0 0 1 20 17Z" fill="#9ec3ef"/></svg>
            <span class="tray-temp">21°C&nbsp; Nublado</span>
            <svg class="ic-12 tray-up" viewBox="0 0 12 12"><path d="M1 8.500 6 3.500l5 5" fill="none" stroke="#fff" stroke-width="1.200"/></svg>
            <svg class="ic-16 tray-ic" viewBox="0 0 16 16"><path d="M3 4h7v8H3ZM10 7l3-1.500v5L10 9M4 1.500h5M4 14.500h5" fill="none" stroke="#fff"/></svg>
            <svg class="ic-16 tray-ic" viewBox="0 0 16 16"><path d="M1 6h3l3-3v10l-3-3H1ZM10 5.500a4 4 0 0 1 0 5M12 3.500a7 7 0 0 1 0 9" fill="none" stroke="#fff"/></svg>
            <svg class="ic-16 tray-ic tray-pen" viewBox="0 0 16 16"><path d="M14 1.500 6 11l-2 1 1-2.500L12 1ZM3 15c-2-1-1-3 0-4M9 9l2 2-2 3" fill="none" stroke="#fff"/></svg>
            <div class="tray-lang"><span>POR</span><span>PTB</span></div>
            <div class="tray-clock"><span>22:35</span><span>21/04/2025</span></div>
            <div class="tray-notif"><svg class="ic-16" viewBox="0 0 16 16"><path d="M1 1h14v11H6l-3 3v-3H1Z" fill="#fff"/><path d="M3.500 4h9M3.500 6.500h9M3.500 9h9" stroke="#2b2b2b"/></svg><i>3</i></div>
        </div>
    </footer>
</body>
</html>
```
FILE: styles.css
```css
* { box-sizing: border-box; }

html, body {
    margin: 0;
    height: 768px;
    overflow: hidden;
}
body {
    font-family: Roboto, "Noto Sans", Arial, sans-serif;
    background: #0e1525;
    display: flex;
    flex-direction: column;
}
svg { display: block; flex: none; }
.defs { display: none; }
code { font-family: "DejaVu Sans Mono", "Liberation Mono", monospace; }

.ic-10 { width: 10px; height: 10px; }
.ic-12 { width: 12px; height: 12px; }
.ic-14 { width: 14px; height: 14px; }
.ic-16 { width: 16px; height: 16px; }
.ic-16-b { width: 18px; height: 18px; }
.ic-18 { width: 18px; height: 18px; }
.ic-24 { width: 24px; height: 24px; }
.purple { color: #7c5cf0; }
.yellow { color: #e8c35a; }
.green { color: #1fc97a; }
.muted { color: #9aa0a8; }

/* abas */
.tabstrip {
    height: 40px;
    background: #a6e9f5;
    display: flex;
    align-items: center;
    flex: none;
}
.tab-menu {
    width: 27px;
    height: 28px;
    margin: 0 4.4px 0 6px;
    background: #fff;
    border-radius: 9px;
    display: flex;
    align-items: center;
    justify-content: center;
    color: #222;
}
.tab {
    width: 34.6px;
    height: 28px;
    display: flex;
    align-items: center;
    justify-content: center;
    background: linear-gradient(#fff, #fff) right center / 2px 16px no-repeat;
    flex: none;
}
.tab.no-sep { background: none; margin-right: 2.600px; }
.tab-r { width: 34px; }
.fav { width: 16px; height: 16px; }
.tab-active {
    width: 32px;
    height: 34px;
    align-self: flex-end;
    background: #fff;
    border-radius: 10px 10px 0 0;
    display: flex;
    align-items: center;
    justify-content: center;
    padding-bottom: 6px;
    position: relative;
    color: #222;
    flex: none;
}
.tab-active::before, .tab-active::after {
    content: "";
    position: absolute;
    bottom: 0;
    width: 8px;
    height: 8px;
}
.tab-active::before { left: -8px; background: radial-gradient(circle at 0 0, transparent 8px, #fff 8.5px); }
.tab-active::after { right: -8px; background: radial-gradient(circle at 100% 0, transparent 8px, #fff 8.5px); }
.tab.first-after { margin-left: 3px; }
.tab-new { width: 34px; display: flex; justify-content: center; color: #222; }
.win-controls {
    margin-left: auto;
    display: flex;
    gap: 34.500px;
    margin-right: 17px;
    color: #222;
}

/* barra de endereco */
.toolbar {
    height: 47px;
    background: #fff;
    border-bottom: 1px solid #c9c9c9;
    border-radius: 10px 10px 0 0;
    display: flex;
    align-items: center;
    flex: none;
    padding-left: 14px;
    padding-bottom: 1px;
}
.tool-ic { width: 16px; height: 16px; margin-right: 20px; }
.toolbar .tool-ic:nth-child(3) { margin-right: 19px; }
.omnibox {
    width: 1036px;
    height: 34px;
    background: #e0e0e0;
    border-radius: 17px;
    display: flex;
    align-items: center;
    padding-left: 4px;
    padding-right: 16px;
}
.site-btn {
    width: 26px;
    height: 26px;
    border-radius: 50%;
    background: #fff;
    display: flex;
    align-items: center;
    justify-content: center;
}
.url {
    margin-left: 6px;
    font-size: 13.750px;
    color: #5f6368;
}
.url b { font-weight: 400; color: #222; }
.omni-right { margin-left: auto; display: flex; gap: 14px; }
.ext { display: flex; align-items: center; margin-left: 17px; }
.ext .ic-18:nth-child(2) { margin-left: 19px; }
.ext-sep { width: 2px; height: 18px; background: #a6e9f5; margin: 0 17px 0 17px; }
.profile { width: 20px; height: 22px; margin-left: 17px; }
.dots-dark { margin-left: 12px; color: #222; }

/* app */
.app {
    flex: 1;
    display: flex;
    flex-direction: column;
    min-height: 0;
    background: #0e1525;
}
.topbar {
    height: 48px;
    flex: none;
    display: grid;
    grid-template-columns: 1fr auto 1fr;
    align-items: center;
    color: #f0f1f2;
}
.top-left { display: flex; align-items: center; padding-left: 16px; }
.repl-logo {
    width: 19px;
    height: 20px;
    margin-left: 16px;
    background: #0b0e16;
    border-radius: 4px;
    display: flex;
    align-items: center;
    justify-content: center;
}
.repl-name { margin-left: 6px; font-size: 14.500px; }
.repl-db { margin-left: 15px; }
.run-btn {
    display: flex;
    height: 32px;
    border-radius: 4px;
    overflow: hidden;
    font-size: 13px;
    font-weight: 700;
}
.run-ic {
    width: 26px;
    background: #2f2a6e;
    color: #7c5cf0;
    display: flex;
    align-items: center;
    justify-content: center;
}
.run-label {
    width: 68px;
    background: #5b3cc4;
    display: flex;
    align-items: center;
    justify-content: center;
    border-radius: 4px 0 0 4px;
}
.top-right { display: flex; align-items: center; justify-content: flex-end; padding-right: 19px; }
.top-btn {
    height: 32px;
    background: #1c2333;
    border-radius: 4px;
    display: flex;
    align-items: center;
    font-size: 14.500px;
    gap: 7px;
    padding-left: 9px;
}
.top-search { margin-right: 14px; }
.top-invite { width: 78px; }
.top-deploy { width: 86px; margin-left: 6px; }
.top-bell { margin-left: 14px; }
.avatar {
    width: 24px;
    height: 24px;
    margin-left: 19px;
    border-radius: 50%;
    background: #333c50;
    color: #a8adb6;
    font-size: 9px;
    display: flex;
    align-items: center;
    justify-content: center;
    position: relative;
}
.avatar-dot {
    position: absolute;
    left: -3px;
    bottom: -3px;
    width: 10px;
    height: 10px;
    border-radius: 50%;
    background: #d9571a;
}
.top-chev { margin-left: 2px; color: #6d7480; width: 10px; }

.workspace {
    flex: 1;
    display: flex;
    padding: 0 8px 8px 0;
    min-height: 0;
}
.rail {
    width: 48px;
    flex: none;
    background: #0a1322;
    margin-bottom: -8px;
    display: flex;
    flex-direction: column;
    align-items: center;
    color: #e4e6e8;
}
.rail-files {
    width: 32px;
    height: 32px;
    border: 1px solid #2b3245;
    border-radius: 4px;
    display: flex;
    align-items: center;
    justify-content: center;
}
.rail-item { height: 18px; display: flex; align-items: center; position: relative; }
.rail-first { margin-top: 157px; }
.rail-sep { width: 24px; height: 1px; background: #3a4152; margin: 15px 0 15px; }
.rail-gap { margin-top: 18px; }
.rail-item.on::before {
    content: "";
    position: absolute;
    left: -7px;
    top: 8px;
    width: 3px;
    height: 3px;
    border-radius: 50%;
    background: #9aa0a8;
}
.rail-help { margin-top: auto; margin-bottom: 14px; font-size: 18px; color: #d8dbde; line-height: 18px; }

.panel {
    display: flex;
    flex-direction: column;
    border-radius: 8px 8px 0 0;
    overflow: hidden;
    min-height: 0;
}
.agent { width: 503px; background: #1c2333; flex: none; color: #e4e6e8; }
.preview { width: 802px; margin-left: 5px; background: #1c2333; flex: none; }

.panel-tabs {
    height: 32px;
    flex: none;
    display: flex;
    align-items: center;
    background: #151d2d;
    border-bottom: 1px solid #2b3245;
    color: #e4e6e8;
    font-size: 13px;
}
.ptab { height: 32px; display: flex; align-items: center; flex: none; padding-bottom: 2px; }
.ptab-agent {
    width: 95px;
    margin-left: 2px;
    background: #1c2333;
    border-top: 1px solid #0079f2;
    border-right: 1px solid #2b3245;
    padding-left: 3px;
    font-size: 14px;
}
.ptab-agent span { margin-left: 5px; width: 46px; }
.ptab-agent .ic-10, .ptab-preview .ic-10 { color: #aab0b8; }
.ptab-plus { margin-left: 12px; color: #aab0b8; }
.ptab-dots { margin-left: auto; margin-right: 10px; color: #c2c8cc; }
.dark-tabs { background: #151d2d; }
.ptab-preview {
    width: 101px;
    padding-left: 5px;
    background: #151d2d;
    border-right: 1px solid #2b3245;
}
.ptab-preview span { margin-left: 4px; width: 48px; font-size: 13.500px; }
.ptab-preview .ic-10 { margin-left: 9px; }
.ptab-console {
    width: 101px;
    padding-left: 6px;
    border-right: 1px solid #2b3245;
    color: #c2c8cc;
}
.ptab-console span { margin-left: 5px; font-size: 13px; }
.ptab-plus2 { margin-left: 12px; color: #aab0b8; }

.chat-bar {
    height: 28px;
    flex: none;
    display: flex;
    align-items: center;
    padding-left: 9px;
    font-size: 12px;
    font-weight: 500;
}
.chat-plus { margin-left: 19px; }
.chat-new { margin-left: 9px; width: 132px; }
.chat-topic { margin-right: 5px; }
.chat-gauge { margin-left: auto; margin-right: 10px; }

.steps { padding: 6px 0 0 21px; flex: none; }
.step {
    height: 28.500px;
    display: flex;
    align-items: center;
    font-size: 14px;
    color: #c2c8cc;
}
.step > span { margin-left: 6px; }
.step code { font-size: 13px; }
.step-chev { margin-left: auto; margin-right: 24px; }

.checkpoint {
    margin: 8px 17px 0 16px;
    height: 104px;
    flex: none;
    background: #2b3245;
    border-radius: 10px;
    padding: 13px 12px 0 12px;
}
.cp-head {
    height: 18px;
    display: flex;
    align-items: center;
    font-size: 12.200px;
    color: #9da2a6;
}
.cp-ic { width: 16px; height: 8px; margin-right: 6px; }
.cp-head code { font-size: 11.500px; }
.cp-gauge { margin-left: auto; color: #d8dbde; }
.cp-title { margin: 7px 0 7px 22px; font-size: 14px; line-height: 20px; color: #f0f1f2; white-space: nowrap; letter-spacing: .06px; }
.cp-rollback {
    margin-left: 22px;
    height: 28px;
    border: 1px solid #4a5167;
    border-radius: 4px;
    display: flex;
    align-items: center;
    justify-content: center;
    gap: 7px;
    font-size: 12px;
    font-weight: 500;
}
.handle {
    width: 45px;
    height: 1px;
    background: #7c6fe0;
    margin: 18px 0 0 262px;
    flex: none;
}
.bubble {
    margin: 0 16px 0 15px;
    height: 176px;
    flex: none;
    background: #2e2f54;
    border-radius: 12px;
    padding: 13px 13px 0 13px;
    font-size: 14px;
    line-height: 22.400px;
    color: #e9eaf0;
    letter-spacing: .06px;
}
.bubble p { margin: 0 0 16.500px; }
.composer {
    margin: 43px 9px 0 8px;
    height: 75px;
    flex: none;
    background: #2b3245;
    border: 1px solid #3d4558;
    border-radius: 8px;
    padding: 9px 6px 0 10px;
}
.composer-ph { font-size: 14px; color: #8a8f99; line-height: 18px; }
.composer-row { display: flex; align-items: center; margin-top: 16px; height: 24px; }
.comp-target { margin-left: 15px; }
.comp-feedback { margin-left: auto; font-size: 12px; color: #9a9fa6; }
.comp-send {
    width: 24px;
    height: 24px;
    margin-left: 17px;
    background: #3c3f47;
    border-radius: 3px;
    display: flex;
    align-items: center;
    justify-content: center;
}

.pv-nav {
    height: 32px;
    flex: none;
    display: flex;
    align-items: center;
    padding-left: 9px;
    background: #1c2333;
    font-size: 12px;
    color: #c2c8cc;
}
.pv-fwd { margin-left: 14px; }
.pv-reload { margin-left: 14px; }
.pv-url {
    width: 511px;
    height: 24px;
    margin-left: 7px;
    background: #2b3245;
    border: 1px solid #3d4558;
    border-radius: 4px;
    display: flex;
    align-items: center;
    font-size: 13px;
}
.pv-host {
    height: 100%;
    width: 91px;
    padding-left: 5px;
    color: #1dbf62;
    border-right: 1px solid #3d4558;
    display: flex;
    align-items: center;
    flex: none;
}
.pv-brace { background: #0a5c22; border-radius: 3px; padding: 1px 0; color: #29d46c; }
.pv-path { margin-left: 8px; color: #f0f1f2; }
.pv-go { margin-left: auto; margin-right: 8px; }
.pv-btn {
    height: 24px;
    border: 1px solid #3d4558;
    border-radius: 4px;
    display: flex;
    align-items: center;
    justify-content: center;
    gap: 5px;
    position: relative;
}
.pv-screen { width: 24px; margin-left: 4px; }
.pv-devtools { width: 85px; margin-left: 4px; }
.pv-newtab { width: 78px; margin-left: 4px; }
.badge {
    position: absolute;
    right: 0;
    top: -7px;
    width: 14px;
    height: 14px;
    border-radius: 50%;
    background: #f5383f;
    color: #222;
    font-size: 11px;
    font-style: normal;
    text-align: center;
    line-height: 14px;
}
.pv-banner {
    height: 37px;
    flex: none;
    background: #004182;
    display: flex;
    align-items: center;
    padding-left: 6px;
    color: #a9d4ff;
    font-size: 12.200px;
}
.banner-text { margin-left: 8px; }
.banner-deploy {
    height: 28px;
    width: 75px;
    margin-left: 6px;
    background: #0053a6;
    border-radius: 3px;
    color: #f0f4f8;
    display: flex;
    align-items: center;
    justify-content: center;
    gap: 7px;
}
.banner-close { margin-left: auto; margin-right: 12px; color: #c9e3ff; }

.pv-page {
    flex: 1;
    min-height: 0;
    background: #fafafa;
    display: flex;
    position: relative;
    overflow: hidden;
    font-family: "Open Sans", "Noto Sans", Arial, sans-serif;
    color: #1c1917;
}
.page-scroll { flex: 1; display: flex; justify-content: center; padding: 23px 16px 0 0; }
.card {
    width: 447px;
    height: 413px;
    background: #fff;
    border: 1px solid #e7e5e4;
    border-radius: 8px;
    box-shadow: 0 2px 5px rgba(0,0,0,.09);
    padding: 0 31px;
    margin-left: 17px;
}
.card h1 {
    margin: 33px 0 0;
    font-size: 23px;
    line-height: 32px;
    font-weight: 700;
    text-align: center;
    letter-spacing: -.33px;
}
.card-sub {
    margin: 8px 0 0;
    text-align: center;
    font-size: 13px;
    line-height: 16px;
    color: #44403c;
}
.seg {
    margin-top: 26px;
    height: 40px;
    background: #f5f5f4;
    border-radius: 6px;
    padding: 4px;
    display: flex;
    font-size: 13.400px;
    font-weight: 600;
    color: #78716c;
}
.seg span { display: flex; align-items: center; justify-content: center; }
.seg-on {
    width: 187px;
    background: #fff;
    border-radius: 4px;
    color: #1c1917;
}
.seg-off { flex: 1; }
.card-info {
    margin: 16px 0 0;
    font-size: 13.200px;
    line-height: 20px;
    color: #57534e;
}
.card-mail { font-weight: 500; }
.otp {
    margin-top: 16px;
    width: 240px;
    height: 40px;
    border: 1px solid #e7e5e4;
    border-radius: 6px;
    display: flex;
    font-size: 14px;
}
.otp span {
    flex: 1;
    display: flex;
    align-items: center;
    justify-content: center;
    border-left: 1px solid #e7e5e4;
}
.otp span:first-child { border-left: 0; }
.resend {
    margin-top: 26px;
    padding-right: 16px;
    text-align: center;
    font-size: 14px;
    line-height: 20px;
    color: #78716c;
    letter-spacing: -.2px;
}
.resend b { margin-left: 16px; font-weight: 600; color: #57534e; font-size: 13.400px; }
.verify {
    margin-top: 26px;
    height: 40px;
    background: #0096f0;
    border-radius: 6px;
    color: #fff;
    font-size: 14px;
    font-weight: 600;
    display: flex;
    align-items: center;
    justify-content: center;
}
.scrollbar {
    width: 14px;
    flex: none;
    display: flex;
    flex-direction: column;
    align-items: center;
    padding: 5px 0 5px;
}
.sb-up { border: 5px solid transparent; border-top: 0; border-bottom: 6px solid #a3a3a3; }
.sb-thumb { width: 10px; height: 426px; margin: 30px 0 4px; background: #8a8a8a; border-radius: 5px; }
.sb-down { border: 5px solid transparent; border-bottom: 0; border-top: 6px solid #a3a3a3; }
.lang {
    position: absolute;
    left: 683px;
    top: 16px;
    width: 88px;
    height: 40px;
    background: #fff;
    border-radius: 20px;
    box-shadow: 0 1px 6px rgba(0,0,0,.1);
    padding: 4px;
    display: flex;
    align-items: center;
}
.lang-on {
    width: 44px;
    height: 32px;
    border-radius: 16px;
    background: #0096f0;
    display: flex;
    align-items: center;
    justify-content: center;
}
.flag-br { width: 18px; height: 13px; }
.flag-us { width: 15px; height: 11px; margin-left: 8px; }
.toast {
    position: absolute;
    left: 383px;
    top: 374px;
    width: 388px;
    height: 94px;
    background: #ff3034;
    border-radius: 6px;
    box-shadow: 0 4px 12px rgba(0,0,0,.15);
    padding: 25px 25px 0;
    color: #fff;
    font-size: 13.500px;
}
.toast-title { font-weight: 600; line-height: 20px; }
.toast-msg { margin-top: 4px; line-height: 20px; color: #ffe3e3; letter-spacing: -.1px; }

/* barra de tarefas */
.taskbar {
    height: 40px;
    flex: none;
    background: #282826;
    display: flex;
    align-items: center;
    color: #fff;
    font-family: "Open Sans", "Noto Sans", Arial, sans-serif;
}
.tb-start { width: 48px; display: flex; justify-content: center; background: #2c3230; height: 100%; align-items: center; }
.tb-search {
    width: 288px;
    height: 40px;
    background: #f3f3f3;
    border: 1px solid #c9c9c9;
    border-width: 1px 0;
    display: flex;
    align-items: center;
    padding-left: 11px;
    color: #222;
    font-size: 14px;
}
.tb-search span { margin-left: 10px; }
.tb-sparkle { width: 60px; height: 32px; margin-left: auto; margin-right: 10px; }
.tb-cortana { width: 50px; display: flex; justify-content: center; }
.tb-cortana i { width: 16px; height: 16px; border: 3px solid #fff; border-radius: 50%; }
.tb-app {
    width: 49px;
    height: 40px;
    display: flex;
    align-items: center;
    justify-content: center;
    flex: none;
}
.tb-view { width: 43px; }
.tb-explorer { width: 54px; padding-left: 4px; }
.tb-running { background: linear-gradient(#76b9ed, #76b9ed) center bottom / 40px 2px no-repeat; }
.tb-active { background: #5a5a58 linear-gradient(#76b9ed, #76b9ed) center bottom / 100% 2px no-repeat; width: 48px; margin-left: 1px; }
.ppt { font-family: "Open Sans", sans-serif; font-size: 11px; font-weight: 700; fill: #fff; }
.tb-badge-txt { font-family: "Open Sans", sans-serif; font-size: 6px; fill: #fff; }
.tb-tray { margin-left: auto; display: flex; align-items: center; font-size: 13px; height: 100%; }
.tray-cloud { width: 26px; height: 18px; }
.tray-temp { margin-left: 6px; margin-right: 24px; font-size: 13.700px; }
.tray-up { margin-right: 10px; }
.tray-ic { margin-right: 8px; }
.tray-pen { margin-left: 4px; }
.tray-lang, .tray-clock { display: flex; flex-direction: column; align-items: center; font-size: 12px; line-height: 20px; }
.tray-lang { margin-left: 3px; width: 30px; }
.tray-clock { width: 62px; font-size: 11.500px; }
.tray-notif { width: 38px; margin-left: 12px; margin-right: 14px; height: 24px; display: flex; justify-content: center; align-items: center; position: relative; }
.tray-notif i {
    position: absolute;
    right: 1px;
    bottom: -3px;
    width: 16px;
    height: 16px;
    border: 1px solid #c8c8c8;
    border-radius: 50%;
    background: #2b2b2b;
    font-size: 10px;
    font-style: normal;
    text-align: center;
    line-height: 14px;
}
```
